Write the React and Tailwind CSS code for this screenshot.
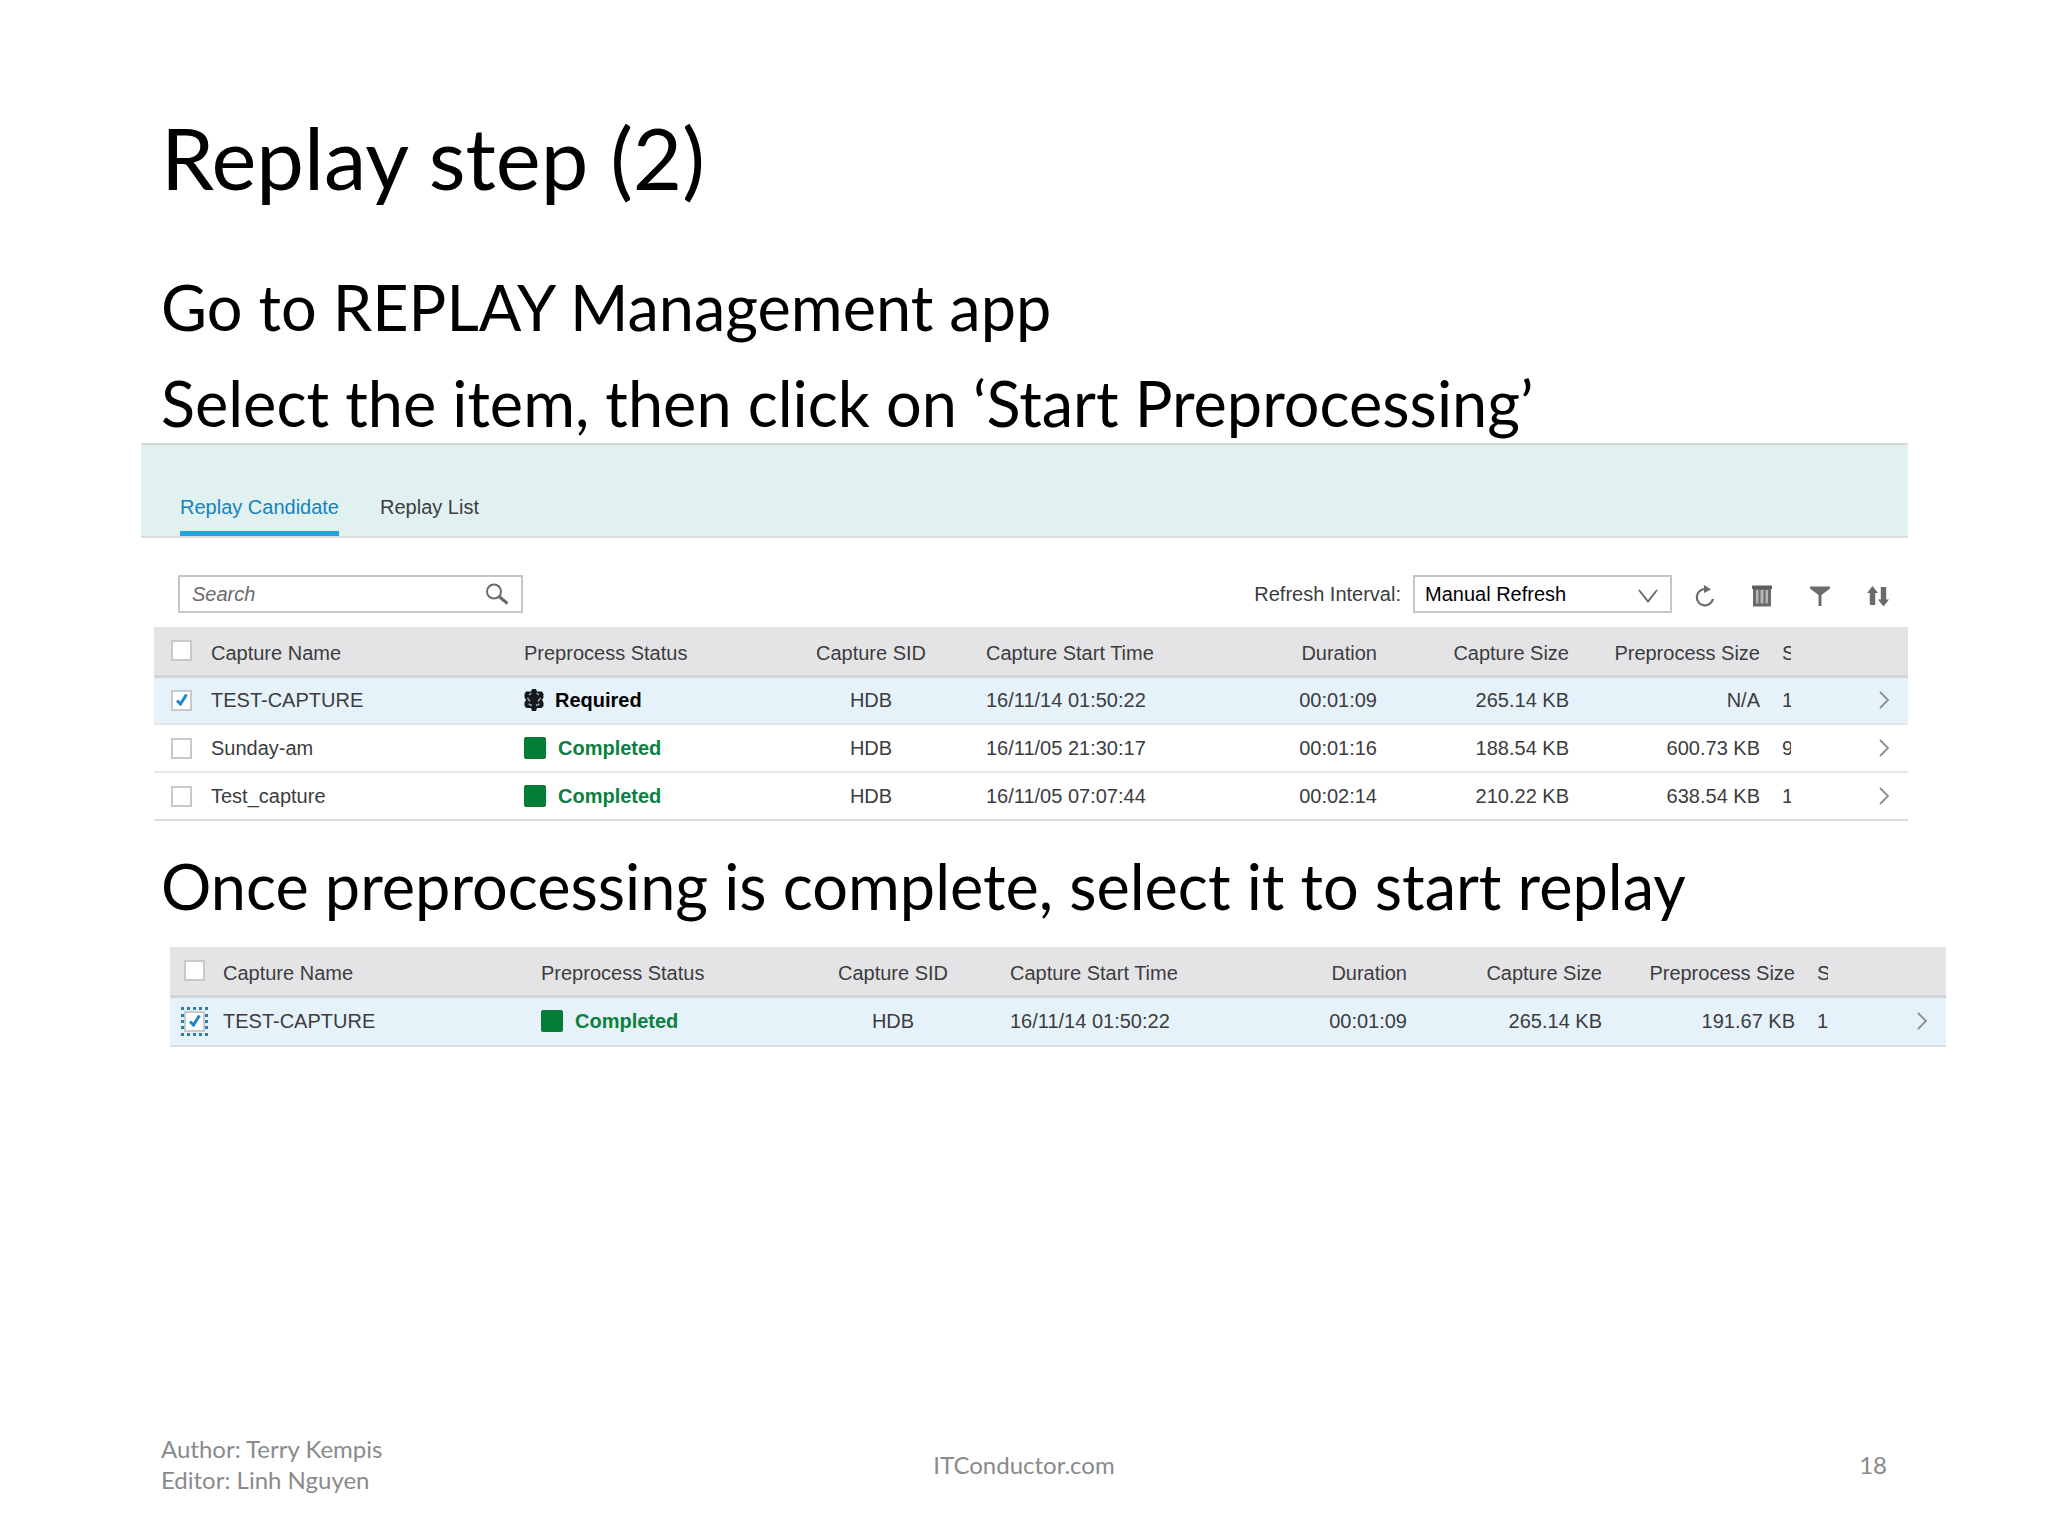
import React, { useState } from "react";

const candidates = [
  {
    name: "TEST-CAPTURE",
    status: "Required",
    sid: "HDB",
    start: "16/11/14 01:50:22",
    duration: "00:01:09",
    size: "265.14 KB",
    preSize: "N/A",
    extra: "1",
    selected: true,
  },
  {
    name: "Sunday-am",
    status: "Completed",
    sid: "HDB",
    start: "16/11/05 21:30:17",
    duration: "00:01:16",
    size: "188.54 KB",
    preSize: "600.73 KB",
    extra: "9",
  },
  {
    name: "Test_capture",
    status: "Completed",
    sid: "HDB",
    start: "16/11/05 07:07:44",
    duration: "00:02:14",
    size: "210.22 KB",
    preSize: "638.54 KB",
    extra: "1",
  },
];

const processed = [
  {
    name: "TEST-CAPTURE",
    status: "Completed",
    sid: "HDB",
    start: "16/11/14 01:50:22",
    duration: "00:01:09",
    size: "265.14 KB",
    preSize: "191.67 KB",
    extra: "1",
    selected: true,
    focused: true,
  },
];

// Column widths, the last column takes what is left
const wideCols = [
  "w-[49px]",
  "w-[313px]",
  "w-[248px]",
  "w-[214px]",
  "w-[260px]",
  "w-[147px]",
  "w-[192px]",
  "w-[191px]",
  "w-[23px]",
  "w-auto",
];
const widerCols = [
  "w-[45px]",
  "w-[318px]",
  "w-[251px]",
  "w-[218px]",
  "w-[260px]",
  "w-[153px]",
  "w-[195px]",
  "w-[193px]",
  "w-[25px]",
  "w-auto",
];

function CheckBox({ label, checked, focused }) {
  return (
    <span
      className={`relative grid h-[29px] w-[27px] place-items-center ${
        focused ? "border-[3px] border-dotted border-[#2f7ea6]" : ""
      }`}
    >
      <input
        type="checkbox"
        aria-label={label}
        defaultChecked={checked}
        className="peer h-[21px] w-[21px] appearance-none border-2 border-[#c9c9cb] bg-white"
      />
      <svg
        viewBox="0 0 12 12"
        className="pointer-events-none absolute hidden h-3 w-3 peer-checked:block"
        fill="none"
        stroke="#1a86cf"
        strokeWidth="3"
      >
        <path d="M1 6.5 L4.5 10 L10.5 0.5" />
      </svg>
    </span>
  );
}

function Status({ value }) {
  if (value === "Required") {
    return (
      <span className="flex items-center gap-[11px] font-bold text-black">
        <svg viewBox="0 0 20 22" className="h-[22px] w-5" fill="#16191c">
          <path d="M8 0 H12 L13 2.5 H18 L19.5 5 V8.5 L18 11 L19.5 13.5 V17 L17.5 19 L13 19 L12 22 H8 L7 19 L2.5 19 L0.5 17 V13.5 L2 11 L0.5 8.5 V5 L2 2.5 H7 Z" />
          <path
            d="M5 6 L7.5 4 M15 6 L12.5 4 M3.5 9 L6 12.5 M16.5 9 L14 12.5 M4.5 15 L8 16.5 M15.5 15 L12 16.5"
            stroke="#9aa7af"
            strokeWidth="1.5"
            fill="none"
          />
        </svg>
        {value}
      </span>
    );
  }
  return (
    <span className="flex items-center gap-3 font-bold text-[#0b8040]">
      <span className="h-[22px] w-[22px] rounded-[2px] bg-[#037c36]" />
      {value}
    </span>
  );
}

function CaptureTable({ rows, cols, label, boxPad, rowHeight }) {
  return (
    <table
      aria-label={label}
      className="w-full table-fixed border-collapse text-[20px] leading-6 whitespace-nowrap text-[#3c3c40]"
    >
      <colgroup>
        {cols.map((c, i) => (
          <col key={i} className={c} />
        ))}
      </colgroup>
      <thead>
        <tr className="h-[49px] border-b-[3px] border-[#d3d4d6] bg-[#e4e4e6] text-left">
          <th className={boxPad}>
            <CheckBox label="Select all captures" />
          </th>
          <th className="px-2 pt-1 font-normal">Capture Name</th>
          <th className="px-2 pt-1 font-normal">Preprocess Status</th>
          <th className="pt-1 text-center font-normal">Capture SID</th>
          <th className="px-2 pt-1 font-normal">Capture Start Time</th>
          <th className="px-2 pt-1 text-right font-normal">Duration</th>
          <th className="px-2 pt-1 text-right font-normal">Capture Size</th>
          <th className="px-2 pt-1 text-right font-normal">Preprocess Size</th>
          <th className="overflow-hidden pt-1 pl-3.5 font-normal">S</th>
          <th />
        </tr>
      </thead>
      <tbody>
        {rows.map((row) => (
          <tr
            key={row.name}
            className={`border-b-2 border-[#e6e6ea] last:border-[#dcdcdf] ${rowHeight} ${
              row.selected ? "bg-[#e6f2f9]" : "bg-white"
            }`}
          >
            <td className={boxPad}>
              <CheckBox
                label={`Select ${row.name}`}
                checked={row.selected}
                focused={row.focused}
              />
            </td>
            <td className="px-2">{row.name}</td>
            <td className="px-2">
              <Status value={row.status} />
            </td>
            <td className="text-center">{row.sid}</td>
            <td className="px-2">{row.start}</td>
            <td className="px-2 text-right">{row.duration}</td>
            <td className="px-2 text-right">{row.size}</td>
            <td className="px-2 text-right">{row.preSize}</td>
            <td className="overflow-hidden pl-3.5">{row.extra}</td>
            <td className="pr-[18px]">
              <button aria-label={`Open ${row.name}`} className="ml-auto block">
                <svg
                  viewBox="0 0 12 18"
                  className="h-[18px] w-3"
                  fill="none"
                  stroke="#8b8f92"
                  strokeWidth="1.8"
                >
                  <path d="M2 1 L10 9 L2 17" />
                </svg>
              </button>
            </td>
          </tr>
        ))}
      </tbody>
    </table>
  );
}

function Toolbar() {
  return (
    <div className="flex items-center justify-between pt-[37px] pr-[19px] pb-[14px] pl-[37px] text-[20px] text-[#3c3c40]">
      <div className="flex h-[38px] w-[345px] items-center border-2 border-[#c6c6c9] bg-white pr-3 pl-3">
        <input
          type="search"
          aria-label="Search"
          placeholder="Search"
          className="min-w-0 flex-1 italic outline-none placeholder:text-[#6b6b6e]"
        />
        <svg
          viewBox="0 0 24 22"
          className="h-[22px] w-6"
          fill="none"
          stroke="#6b6b6e"
        >
          <circle cx="9" cy="8.5" r="7" strokeWidth="2" />
          <path d="M14 13.5 L22.5 20.5" strokeWidth="3" />
        </svg>
      </div>

      <div className="flex items-center">
        <label htmlFor="interval" className="mr-3">
          Refresh Interval:
        </label>
        <div className="relative mr-[21px]">
          <select
            id="interval"
            className="block h-[38px] w-[259px] appearance-none border-2 border-[#c6c6c9] bg-white pl-[10px] text-black"
          >
            <option>Manual Refresh</option>
          </select>
          <svg
            viewBox="0 0 20 14"
            className="pointer-events-none absolute top-[14px] right-[14px] h-[14px] w-5"
            fill="none"
            stroke="#6b6b6e"
            strokeWidth="2"
          >
            <path d="M1 1 L10 12.5 L19 1" />
          </svg>
        </div>
        <div className="flex items-center gap-9 pt-1">
          <button aria-label="Refresh">
            <svg viewBox="0 0 22 22" className="block h-[22px] w-[22px]">
              <path
                d="M12 4 A8.2 8.2 0 1 0 20 14"
                fill="none"
                stroke="#6b6b6e"
                strokeWidth="2.2"
              />
              <path d="M11 0 L18 4.5 L11 8 Z" fill="#6b6b6e" />
            </svg>
          </button>
          <button aria-label="Delete">
            <svg viewBox="0 0 22 22" className="block h-[22px] w-[22px]">
              <path d="M1 0.5 H21 V4 H1 Z" fill="#5f5f62" />
              <path d="M2 4 H20 V21.5 H2 Z" fill="#6b6b6e" />
              <path
                d="M5 5 H7.5 V18.5 H5 Z M9.5 5 H12.5 V18.5 H9.5 Z M14.5 5 H17 V18.5 H14.5 Z"
                fill="#b5b5b8"
              />
            </svg>
          </button>
          <button aria-label="Filter">
            <svg viewBox="0 0 22 22" className="block h-[22px] w-[22px]">
              <path
                d="M1 1.5 H21 V3.5 L12.5 10 V21 H9.5 V10 L1 3.5 Z"
                fill="#6b6b6e"
              />
            </svg>
          </button>
          <button aria-label="Sort">
            <svg
              viewBox="0 0 22 22"
              className="block h-[22px] w-[22px]"
              fill="#6b6b6e"
            >
              <path d="M5.5 1 L11 8 H8.2 V20 H2.8 V8 H0 Z" />
              <path d="M16.5 21.5 L11 14.5 H13.8 V2 H19.2 V14.5 H22 Z" />
            </svg>
          </button>
        </div>
      </div>
    </div>
  );
}

const tabs = ["Replay Candidate", "Replay List"];

export default function App() {
  const [activeTab, setActiveTab] = useState(tabs[0]);

  return (
    <main className="flex min-h-screen flex-col bg-white font-['Lato',sans-serif] text-black">
      <h1 className="mt-[99px] ml-[161px] text-[85px] leading-[116px]">
        Replay step (2)
      </h1>
      <div className="mt-[52px] ml-[161px] flex flex-col gap-4 text-[63px] leading-[80px]">
        <p>Go to REPLAY Management app</p>
        <p>Select the item, then click on ‘Start Preprocessing’</p>
      </div>

      <section className="mr-[140px] ml-[141px] font-['Liberation_Sans',Arial,sans-serif]">
        <nav className="flex h-[95px] items-end gap-[41px] border-t-2 border-b-2 border-t-[#d3dad9] border-b-[#d6dedf] bg-[#e0f1ef] pl-[39px] text-[20px]">
          {tabs.map((tab) => (
            <button
              key={tab}
              onClick={() => setActiveTab(tab)}
              className={`border-b-[5px] pb-3 leading-6 ${
                tab === activeTab
                  ? "border-[#22a3e0] text-[#1583bd]"
                  : "border-transparent text-[#3c3c40]"
              }`}
            >
              {tab}
            </button>
          ))}
        </nav>
        <Toolbar />
        <div className="ml-[13px]">
          <CaptureTable
            rows={candidates}
            cols={wideCols}
            label="Replay candidates"
            boxPad="pl-[14px]"
            rowHeight="h-[48px]"
          />
        </div>
      </section>

      <p className="mt-[17px] ml-[161px] text-[63px] leading-[96px]">
        Once preprocessing is complete, select it to start replay
      </p>
      <section className="mt-[13px] mr-[102px] ml-[170px] font-['Liberation_Sans',Arial,sans-serif]">
        <CaptureTable
          rows={processed}
          cols={widerCols}
          label="Preprocessed captures"
          boxPad="pl-[11px]"
          rowHeight="h-[50px]"
        />
      </section>

      <footer className="mt-auto mb-[41px] grid grid-cols-3 items-center px-[161px] text-[24px] leading-[31px] text-[#8a8a8c]">
        <div>
          <p>Author: Terry Kempis</p>
          <p>Editor: Linh Nguyen</p>
        </div>
        <p className="text-center">ITConductor.com</p>
        <p className="text-right">18</p>
      </footer>
    </main>
  );
}
